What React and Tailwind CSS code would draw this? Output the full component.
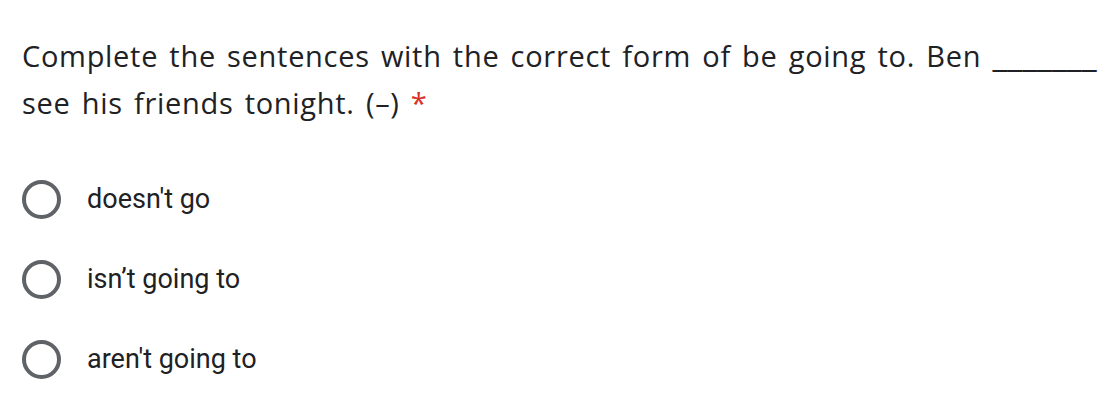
export default function App() {
  const options = ["doesn't go", "isn’t going to", "aren't going to"];
  return (
    <div className="w-[1118px] h-[412px] bg-white overflow-hidden pl-[22px] pt-[32px]">
      <div className="text-[#202124] text-[29px] leading-[47px] tracking-[0.7px] [word-spacing:3px] font-['Open_Sans',sans-serif] w-[1090px]">
        Complete the sentences with the correct form of be going to. Ben <span className="tracking-normal text-[34px] leading-none [word-spacing:0px]">_______</span> see his friends tonight. (–) <span className="text-[#d93025]">*</span>
      </div>
      <div className="mt-[53px] flex flex-col gap-[40px]">
        {options.map((o) => (
          <div key={o} className="flex items-center h-[40px]">
            <div className="w-[39px] h-[39px] rounded-full border-[4px] border-[#5f6368] mr-[26px]" />
            <span className="text-[27px] text-[#202124] font-['Roboto',sans-serif]">{o}</span>
          </div>
        ))}
      </div>
    </div>
  );
}
